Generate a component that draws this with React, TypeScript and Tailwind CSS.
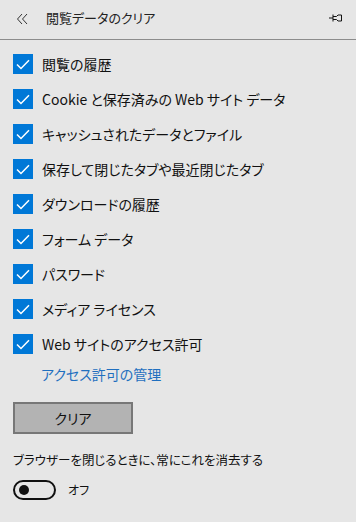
import React from "react";

const items = [
  "閲覧の履歴",
  "Cookie と保存済みの Web サイト データ",
  "キャッシュされたデータとファイル",
  "保存して閉じたタブや最近閉じたタブ",
  "ダウンロードの履歴",
  "フォーム データ",
  "パスワード",
  "メディア ライセンス",
  "Web サイトのアクセス許可",
];

function Check() {
  return (
    <div className="w-5 h-5 bg-[#0078d7] flex items-center justify-center shrink-0">
      <svg width="14" height="11" viewBox="0 0 14 11" fill="none">
        <path d="M1 5.5 L5 9.5 L13 1.2" stroke="white" strokeWidth="1.5" />
      </svg>
    </div>
  );
}

export default function App() {
  return (
    <div
      className="w-[356px] h-[522px] bg-[#e6e6e6] text-[#000] overflow-hidden [font-feature-settings:'palt']"
      style={{ fontFamily: '"Noto Sans CJK JP", "Noto Sans", sans-serif' }}
    >
      <div className="h-[40px] flex items-center pl-[16px] pr-[12px] border-b border-[#8c8c8c]">
        <svg width="13" height="12" viewBox="0 0 13 12" fill="none" className="mt-[-2px]">
          <path d="M6 1 L1.5 6 L6 11" stroke="#333" strokeWidth="1" />
          <path d="M11 1 L6.5 6 L11 11" stroke="#333" strokeWidth="1" />
        </svg>
        <div className="ml-[17px] text-[13px] text-[#222] leading-none mt-[-4px]">閲覧データのクリア</div>
        <div className="ml-auto mt-[-4px]">
          <svg width="16" height="12" viewBox="0 0 16 12" fill="none">
            <path d="M1 6 H5" stroke="#111" strokeWidth="1" />
            <path d="M5 2.5 V9.5" stroke="#111" strokeWidth="1" />
            <path d="M5 4.5 H8.5 L10 3 H13.5 V9 H10 L8.5 7.5 H5" stroke="#111" strokeWidth="1" />
          </svg>
        </div>
      </div>
      <div className="pl-[13px] pt-[14px] flex flex-col gap-[15px]">
        {items.map((t) => (
          <div key={t} className="flex items-center h-[20px]">
            <Check />
            <span className="ml-[9px] text-[14px] leading-none text-[#111] mt-[-1px]">{t}</span>
          </div>
        ))}
      </div>
      <div className="pl-[41px] mt-[13px] text-[14px] leading-none text-[#1f6fbf]">アクセス許可の管理</div>
      <div className="pl-[13px] mt-[21px]">
        <div className="w-[120px] h-[32px] bg-[#b3b3b3] border-2 border-[#777] flex items-center justify-center text-[14px] text-[#111] leading-none">
          クリア
        </div>
      </div>
      <div className="pl-[13px] mt-[20px] text-[12.5px] leading-none text-[#111]">
        ブラウザーを閉じるときに、常にこれを消去する
      </div>
      <div className="pl-[13px] mt-[13px] flex items-center">
        <div className="w-[43px] h-[20px] border-2 border-[#111] rounded-full flex items-center pl-[4px]">
          <div className="w-[10px] h-[10px] rounded-full bg-[#111]" />
        </div>
        <span className="ml-[12px] text-[12px] leading-none text-[#111]">オフ</span>
      </div>
    </div>
  );
}
